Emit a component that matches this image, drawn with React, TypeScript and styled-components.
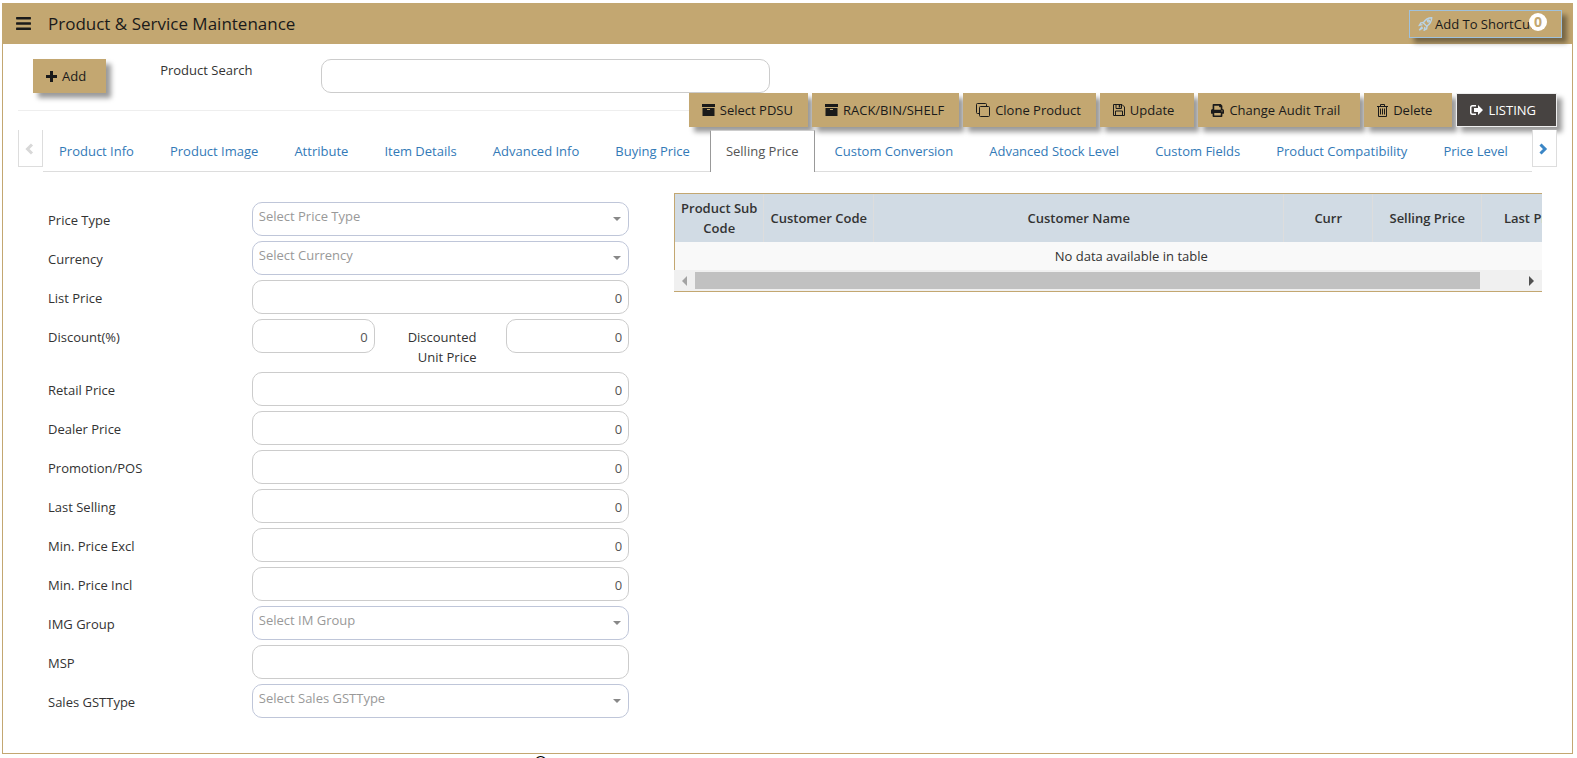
import React from 'react';
import styled, { createGlobalStyle, css } from 'styled-components';
import { FaBars, FaPrint } from 'react-icons/fa';

const gold = '#c3a771';
const line = '#dddddd';

const GlobalStyle = createGlobalStyle`
  *, *::before, *::after { box-sizing: border-box; }
  body {
    margin: 0;
    background: #fff;
    color: #333;
    font: 13px/20px "Segoe UI", "Open Sans", "Noto Sans", sans-serif;
  }
  button, input, select { font: inherit; color: inherit; }
`;

const Page = styled.div`
  padding: 3px 4px 0 2px;
`;

const Panel = styled.main`
  border: 1px solid ${gold};
  border-top: 0;
  padding-bottom: 35px;
`;

const Header = styled.header`
  display: flex;
  align-items: center;
  height: 41px;
  padding: 0 10px 0 12px;
  background: ${gold};
  color: #1a1a1a;
`;

const MenuButton = styled.button`
  display: flex;
  padding: 0;
  border: 0;
  background: none;
  font-size: 17px;
`;

const Title = styled.h1`
  flex: 1;
  margin: 0 0 0 16px;
  font-size: 17px;
  line-height: 24px;
  font-weight: 400;
`;

const shadow = css`
  box-shadow: 5px 5px 5px rgba(0, 0, 0, 0.4);
`;

const ShortcutButton = styled.button`
  display: flex;
  position: relative;
  align-items: center;
  gap: 2px;
  width: 153px;
  height: 28px;
  padding: 0 8px;
  border: 1px solid #9fc1dc;
  background: ${gold};
  white-space: nowrap;
  ${shadow}
`;

const Badge = styled.span`
  position: absolute;
  top: 2px;
  right: 14px;
  width: 18px;
  height: 18px;
  border-radius: 9px;
  background: #fff;
  color: ${gold};
  font-size: 14px;
  font-weight: 700;
  line-height: 18px;
  text-align: center;
`;

const ActionButton = styled.button<{ $dark?: boolean; $tight?: boolean }>`
  display: flex;
  align-items: center;
  gap: 5px;
  height: 34px;
  padding: 0 ${(p) => (p.$tight ? 15 : 20)}px 0 13px;
  border: ${(p) => (p.$dark ? '1px solid #eee' : '0')};
  background: ${(p) => (p.$dark ? '#474341' : gold)};
  color: ${(p) => (p.$dark ? '#fff' : '#1a1a1a')};
  white-space: nowrap;
  ${shadow}
`;

const SearchRow = styled.div`
  display: flex;
  padding: 15px 30px 0;
`;

const SearchLabel = styled.label`
  width: 161px;
  margin-left: 54px;
  padding-top: 1px;
`;

const inputBox = css`
  display: block;
  width: 100%;
  height: 34px;
  border: 1px solid #ccc;
  border-radius: 10px;
  background: #fff;
  color: #555;
`;

const SearchInput = styled.input`
  ${inputBox}
  flex: 0 1 449px;
  padding: 6px 12px;
`;

const Toolbar = styled.div`
  display: flex;
  align-items: center;
  gap: 4px;
  padding: 0 15px;
`;

const Rule = styled.hr`
  flex: 1;
  margin: 0 -4px 0 0;
  border: 0;
  border-top: 1px solid #eee;
`;

const TabBar = styled.nav`
  display: flex;
  align-items: flex-start;
  margin: 3px 15px 0;
`;

const TabArrow = styled.button<{ $disabled?: boolean }>`
  display: flex;
  align-items: center;
  justify-content: center;
  flex: none;
  width: 25px;
  height: 37px;
  padding: 1px 2px 0 0;
  border: 1px solid ${line};
  border-top: 0;
  background: #fff;
  color: ${(p) => (p.$disabled ? '#d8d8d8' : '#3b86c6')};
`;

const TabList = styled.div`
  display: flex;
  flex: 1;
  justify-content: space-between;
  min-width: 0;
  height: 42px;
  padding-right: 8px;
  border-bottom: 1px solid ${line};
`;

const Tab = styled.a<{ $active?: boolean }>`
  height: 42px;
  padding: 10px 15px;
  border: 1px solid transparent;
  border-bottom: 0;
  color: #337ab7;
  text-decoration: none;
  white-space: nowrap;
  ${(p) =>
    p.$active &&
    css`
      border-color: #ccc #999 #fff;
      background: #fff;
      color: #555;
    `}
`;

const Content = styled.div`
  display: grid;
  grid-template-columns: minmax(0, 5fr) minmax(0, 7fr);
  padding: 21px 15px 0;
`;

const Form = styled.form`
  display: grid;
  gap: 5px;
  align-content: start;
  margin-top: 9px;
  padding: 0 15px;
`;

const FormRow = styled.div<{ $split?: boolean }>`
  display: grid;
  grid-template-columns: ${(p) =>
    p.$split
      ? 'minmax(0, 4fr) minmax(0, 3fr) minmax(0, 2fr) minmax(0, 3fr)'
      : 'minmax(0, 4fr) minmax(0, 8fr)'};
`;

const FieldLabel = styled.label<{ $right?: boolean }>`
  padding: 8px 15px 0;
  text-align: ${(p) => (p.$right ? 'right' : 'left')};
`;

const Field = styled.div`
  position: relative;
  padding: 0 15px;
`;

const NumberInput = styled.input`
  ${inputBox}
  padding: 7px 6px 5px;
  text-align: right;
`;

const Select = styled.select`
  ${inputBox}
  padding: 0 24px 6px 6px;
  border-color: #bfc6d9;
  color: #999;
  appearance: none;
`;

const Caret = styled.span`
  position: absolute;
  top: 15px;
  right: 23px;
  border: 4px solid transparent;
  border-top-color: #888;
  border-bottom: 0;
  pointer-events: none;
`;

const TableColumn = styled.section`
  padding: 0 15px;
`;

const TableFrame = styled.div`
  overflow: hidden;
  border-bottom: 1px solid ${gold};
`;

const DataTable = styled.table`
  width: 914px;
  border: 1px solid ${gold};
  border-bottom: 0;
  border-spacing: 0;
  table-layout: fixed;
`;

const HeadCell = styled.th`
  height: 48px;
  padding: 4px 3px;
  border-right: 1px solid ${line};
  background: #d1dbe4;
  font-weight: 600;
`;

const EmptyCell = styled.td`
  height: 28px;
  padding: 4px;
  background: #f9f9f9;
  text-align: center;
`;

const ScrollTrack = styled.div`
  display: flex;
  align-items: center;
  height: 21px;
  padding: 0 8px;
  background: #f0f0f0;
`;

const ScrollSpace = styled.div`
  flex: 1;
  margin: 0 8px;
`;

const ScrollThumb = styled.div`
  width: 95%;
  height: 17px;
  background: #c1c1c1;
`;

const ScrollArrow = styled.span<{ $forward?: boolean }>`
  border: 5px solid transparent;
  ${(p) =>
    p.$forward
      ? 'border-left-color: #505050; border-right: 0;'
      : 'border-right-color: #a3a3a3; border-left: 0;'}
`;

const Footer = styled.footer`
  margin-left: 532px;
  height: 4px;
  overflow: hidden;
  color: #000;
  font-size: 16px;
  font-weight: 700;
  line-height: 16px;
`;

const RocketIcon = () => (
  <svg width="15" height="14" viewBox="0 0 14 14" fill="none" stroke="#b9d3e6" strokeWidth="1.4">
    <path d="M13.2.8C9.5.8 6.9 2.500 4.800 5.800L8.200 9.200C11.500 7.100 13.200 4.500 13.200.8Z" />
    <path d="M5 5.500 2.300 5.800.9 8.200 4 7.600M8.500 9l-.3 2.700-2.400 1.400.6-3.100M3.600 9.600.8 13.200l3.600-2.600" />
    <circle cx="10" cy="4" r="1" />
  </svg>
);

const PlusIcon = () => (
  <svg width="11" height="11" viewBox="0 0 11 11" fill="none" stroke="currentColor" strokeWidth="3">
    <path d="M0 5.500h11M5.500 0v11" />
  </svg>
);

const ArchiveIcon = () => (
  <svg width="13" height="12" viewBox="0 0 13 12" fill="currentColor">
    <path d="M0 0h13v3H0zM.5 4h12v8H.5zM5 5v1h3V5z" fillRule="evenodd" />
  </svg>
);

const CloneIcon = () => (
  <svg width="14" height="14" viewBox="0 0 14 14" fill="none" stroke="currentColor">
    <rect x="3.500" y="3.500" width="10" height="10" rx="1" />
    <path d="M3.500 10.500h-2a1 1 0 0 1-1-1v-8a1 1 0 0 1 1-1h8a1 1 0 0 1 1 1v2" />
  </svg>
);

const SaveIcon = () => (
  <svg width="12" height="12" viewBox="0 0 12 12" fill="none" stroke="currentColor">
    <path d="M.5.5h8.500l2.500 2.500v8.500H.5zM3 .5v4h5.500v-4M2.500 11.500v-4.500h7v4.500" />
    <path d="M6.500 1v2.500" strokeWidth="1.500" />
  </svg>
);

const TrashIcon = () => (
  <svg width="11" height="13" viewBox="0 0 11 13" fill="none" stroke="currentColor">
    <path d="M0 2.500h11M3.500 2.500v-2h4v2M1.500 2.500v10h8v-10M3.500 4.500v6M5.500 4.500v6M7.500 4.500v6" />
  </svg>
);

const ExitIcon = () => (
  <svg width="13" height="12" viewBox="0 0 13 12" fill="currentColor">
    <path d="M6 1H2.500A2.500 2.500 0 0 0 0 3.500v5A2.500 2.500 0 0 0 2.500 11H6V9.500H2.500a1 1 0 0 1-1-1v-5a1 1 0 0 1 1-1H6z" />
    <path d="M8 1 13 6l-5 5V8H4V4h4z" />
  </svg>
);

const Chevron = ({ flip }: { flip?: boolean }) => (
  <svg width="9" height="12" viewBox="0 0 9 12" fill="none" stroke="currentColor" strokeWidth="3">
    <path d={flip ? 'M7 1.500 2.500 6 7 10.500' : 'M1.500 1.500 6 6l-4.500 4.500'} />
  </svg>
);

const tabs = [
  'Product Info', 'Product Image', 'Attribute', 'Item Details', 'Advanced Info', 'Buying Price',
  'Selling Price', 'Custom Conversion', 'Advanced Stock Level', 'Custom Fields',
  'Product Compatibility', 'Price Level',
];

const columns: [string, number][] = [
  ['Product Sub Code', 89],
  ['Customer Code', 110],
  ['Customer Name', 410],
  ['Curr', 89],
  ['Selling Price', 109],
  ['Last Price', 105],
];

const InputRow = ({ id, label, value = '0' }: { id: string; label: string; value?: string }) => (
  <FormRow>
    <FieldLabel htmlFor={id}>{label}</FieldLabel>
    <Field><NumberInput id={id} defaultValue={value} /></Field>
  </FormRow>
);

const SelectRow = ({ id, label, hint }: { id: string; label: string; hint: string }) => (
  <FormRow>
    <FieldLabel htmlFor={id}>{label}</FieldLabel>
    <Field>
      <Select id={id}><option>{hint}</option></Select>
      <Caret />
    </Field>
  </FormRow>
);

export default function App() {
  return (
    <Page>
      <GlobalStyle />
      <Panel>
        <Header>
          <MenuButton aria-label="Menu"><FaBars /></MenuButton>
          <Title>Product &amp; Service Maintenance</Title>
          <ShortcutButton><RocketIcon />Add To ShortCut<Badge>0</Badge></ShortcutButton>
        </Header>
        <SearchRow>
          <ActionButton><PlusIcon />Add</ActionButton>
          <SearchLabel htmlFor="search">Product Search</SearchLabel>
          <SearchInput id="search" type="text" />
        </SearchRow>
        <Toolbar>
          <Rule />
          <ActionButton $tight><ArchiveIcon />Select PDSU</ActionButton>
          <ActionButton $tight><ArchiveIcon />RACK/BIN/SHELF</ActionButton>
          <ActionButton $tight><CloneIcon />Clone Product</ActionButton>
          <ActionButton><SaveIcon />Update</ActionButton>
          <ActionButton><FaPrint size={13} />Change Audit Trail</ActionButton>
          <ActionButton><TrashIcon />Delete</ActionButton>
          <ActionButton $dark><ExitIcon />LISTING</ActionButton>
        </Toolbar>
        <TabBar>
          <TabArrow $disabled aria-label="Previous tabs"><Chevron flip /></TabArrow>
          <TabList>
            {tabs.map((t) => (
              <Tab key={t} href="#" $active={t === 'Selling Price'}>{t}</Tab>
            ))}
          </TabList>
          <TabArrow aria-label="Next tabs"><Chevron /></TabArrow>
        </TabBar>
        <Content>
          <Form>
            <SelectRow id="price-type" label="Price Type" hint="Select Price Type" />
            <SelectRow id="currency" label="Currency" hint="Select Currency" />
            <InputRow id="list-price" label="List Price" />
            <FormRow $split>
              <FieldLabel htmlFor="discount">Discount(%)</FieldLabel>
              <Field><NumberInput id="discount" defaultValue="0" /></Field>
              <FieldLabel htmlFor="discounted" $right>Discounted Unit Price</FieldLabel>
              <Field><NumberInput id="discounted" defaultValue="0" /></Field>
            </FormRow>
            <InputRow id="retail" label="Retail Price" />
            <InputRow id="dealer" label="Dealer Price" />
            <InputRow id="promotion" label="Promotion/POS" />
            <InputRow id="last-selling" label="Last Selling" />
            <InputRow id="min-excl" label="Min. Price Excl" />
            <InputRow id="min-incl" label="Min. Price Incl" />
            <SelectRow id="img-group" label="IMG Group" hint="Select IM Group" />
            <InputRow id="msp" label="MSP" value="" />
            <SelectRow id="gst" label="Sales GSTType" hint="Select Sales GSTType" />
          </Form>
          <TableColumn>
            <TableFrame>
              <DataTable>
                <colgroup>
                  {columns.map(([name, width]) => <col key={name} width={width} />)}
                </colgroup>
                <thead>
                  <tr>{columns.map(([name]) => <HeadCell key={name}>{name}</HeadCell>)}</tr>
                </thead>
                <tbody>
                  <tr><EmptyCell colSpan={6}>No data available in table</EmptyCell></tr>
                </tbody>
              </DataTable>
              <ScrollTrack>
                <ScrollArrow />
                <ScrollSpace><ScrollThumb /></ScrollSpace>
                <ScrollArrow $forward />
              </ScrollTrack>
            </TableFrame>
          </TableColumn>
        </Content>
      </Panel>
      <Footer>©</Footer>
    </Page>
  );
}
